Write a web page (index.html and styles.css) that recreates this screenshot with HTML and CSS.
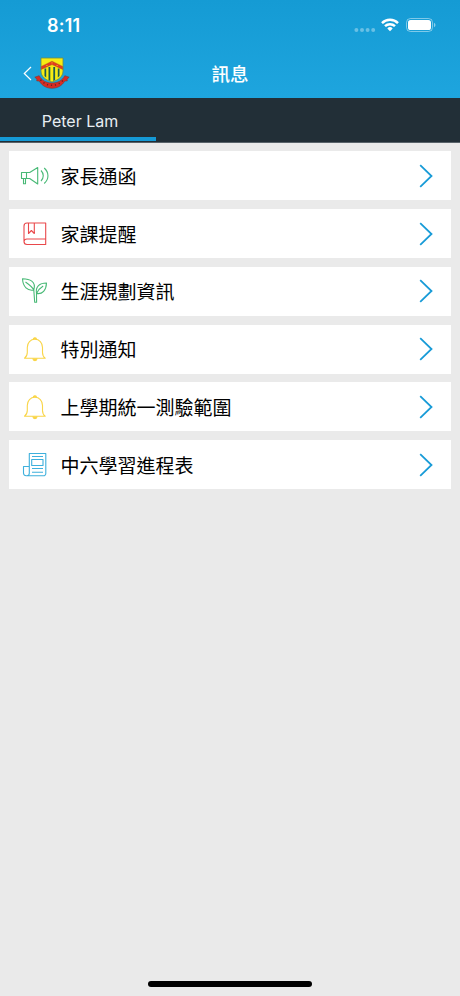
FILE: index.html
```html
<!DOCTYPE html>
<html lang="zh-Hant">
<head>
  <meta charset="UTF-8">
  <meta name="viewport" content="width=device-width, initial-scale=1.0">
  <title>訊息</title>
  <link rel="stylesheet" href="styles.css">
</head>
<body>

  <header class="top">
    <div class="status-bar">
      <span class="time">8:11</span>
      <div class="status-icons">
        <svg class="signal" width="22" height="6" viewBox="0 0 22 6" fill="#fff" opacity=".35">
          <circle cx="2.4" cy="3" r="2"/><circle cx="8" cy="3" r="2"/><circle cx="13.6" cy="3" r="2"/><circle cx="19.2" cy="3" r="2"/>
        </svg>
        <svg class="wifi" width="18" height="14" viewBox="0 0 18 14" fill="none" stroke="#fff" stroke-width="2.5">
          <path d="M1 5.1a11.4 11.4 0 0 1 16 0"/>
          <path d="M4 8.2a7.1 7.1 0 0 1 10 0"/>
          <path d="M9 13.2l-2.7-2.8a3.8 3.8 0 0 1 5.4 0z" fill="#fff" stroke="none"/>
        </svg>
        <svg class="battery" width="30" height="14" viewBox="0 0 30 14">
          <rect x=".5" y=".5" width="26" height="13" rx="4" fill="none" stroke="#fff" opacity=".45"/>
          <rect x="2" y="2" width="23" height="10" rx="2.6" fill="#fff"/>
          <path d="M28 4.8c2 .8 2 3.600 0 4.400z" fill="#fff" opacity=".5"/>
        </svg>
      </div>
    </div>
    <nav class="nav-bar">
      <a class="back" href="#">
        <svg width="9" height="15" viewBox="0 0 9 15" fill="none" stroke="#fff" stroke-width="1.2"><path d="M8 1L1.300 7.500 8 14"/></svg>
        <svg class="crest" width="36" height="34" viewBox="0 0 36 34">
          <path d="M7 2h22v13c0 6-5 9-11 11-6-2-11-5-11-11z" fill="#f6ec13" stroke="#6d8a4c" stroke-width=".8"/>
          <path d="M10.500 12.500h1.700v9l-1.700-1.500zM14.500 11h1.800v14l-1.800-1zM19.300 11h1.800v13l-1.800 1zM23.800 12.500h1.700v7.500l-1.700 1.500z" fill="#1c5b50"/>
          <path d="M7.300 10.400L18 5.200l10.700 5.200v3L18 8.600 7.300 13.400z" fill="#e33a20" stroke="#9b4a1d" stroke-width=".4"/>
          <path d="M12.500 9.500h.8M17.600 6.900h.8M22.700 9.500h.8" stroke="#f6ec13" stroke-width="1"/>
          <path d="M.8 21.200l4.400-1.500c2.500 4.800 7 7.300 12.800 7.300s10.300-2.500 12.800-7.300l4.400 1.500-2.200 2 .3 1.700-2.500.2c-3 4.800-7.500 7.200-12.800 7.200S8.200 29.900 5.200 25.100l-2.500-.2.300-1.700z" fill="#d92b24" stroke="#80352b" stroke-width=".6"/>
          <path d="M6.500 23.800c6 7.400 17 7.400 23 0" fill="none" stroke="#69251f" stroke-width="1.500" stroke-dasharray="1.200 2.800"/>
        </svg>
      </a>
      <h1>訊息</h1>
    </nav>
  </header>

  <div class="tabs">
    <a class="tab active" href="#">Peter Lam</a>
  </div>

  <main class="list">
    <a class="item" href="#">
      <svg class="icon green" viewBox="0 0 30 30">
        <path d="M1.500 11.500h5v6h-5zM6.500 11.500h3.200l8-5v16.500l-8-5.500H6.500M3.500 17.500v5.200h2v-5.200M21 9.500c3 3 3 7.500 0 10.500M24.200 7c5 4.500 5 11 0 15.500"/>
      </svg>
      <span class="label">家長通函</span>
      <svg class="arrow" viewBox="0 0 14 24"><path d="M1.200 1.200L12.500 12 1.200 22.800"/></svg>
    </a>
    <a class="item" href="#">
      <svg class="icon red" viewBox="0 0 30 30">
        <path d="M7 4h18.700v21.500H7a3 3 0 0 1-3-3V7a3 3 0 0 1 3-3zM4 22.500a3 3 0 0 1 3-2.500h18.700M8.500 4v10.500l2.900-3 2.900 3V4"/>
      </svg>
      <span class="label">家課提醒</span>
      <svg class="arrow" viewBox="0 0 14 24"><path d="M1.200 1.200L12.500 12 1.200 22.800"/></svg>
    </a>
    <a class="item" href="#">
      <svg class="icon green" viewBox="0 0 30 30">
        <path d="M13.800 14C7.500 15.200 3 11 2.500 2.800 9.500 3 16.500 5 13.800 14zM16.500 17.500c-1.200-7 3-10.500 10-10.500-.3 7.200-4 11.500-10 10.500zM5.500 6c3.500 2.500 7 5 8.300 8l.9 12.200h1.900l-.1-8.700c1.300-3 3.500-5.500 6.700-7.500"/>
      </svg>
      <span class="label">生涯規劃資訊</span>
      <svg class="arrow" viewBox="0 0 14 24"><path d="M1.200 1.200L12.500 12 1.200 22.800"/></svg>
    </a>
    <a class="item" href="#">
      <svg class="icon yellow" viewBox="0 0 30 30">
        <path d="M4.500 24.200h20.700c-2-1.500-2.700-3.200-2.700-5.700v-5c0-5-3.200-8.200-7.600-8.200s-7.600 3.200-7.600 8.200v5c0 2.500-.8 4.200-2.800 5.700z"/><path d="M13.300 5.200c0-1.800 3.200-1.800 3.200 0M12.800 24.500c.3 2.800 4 2.800 4.300 0" fill="#f9d548"/>
      </svg>
      <span class="label">特別通知</span>
      <svg class="arrow" viewBox="0 0 14 24"><path d="M1.200 1.200L12.500 12 1.200 22.800"/></svg>
    </a>
    <a class="item" href="#">
      <svg class="icon yellow" viewBox="0 0 30 30">
        <path d="M4.500 24.200h20.700c-2-1.500-2.700-3.200-2.700-5.700v-5c0-5-3.200-8.200-7.600-8.200s-7.600 3.200-7.600 8.200v5c0 2.500-.8 4.200-2.800 5.700z"/><path d="M13.300 5.200c0-1.800 3.200-1.800 3.200 0M12.800 24.500c.3 2.800 4 2.800 4.300 0" fill="#f9d548"/>
      </svg>
      <span class="label">上學期統一測驗範圍</span>
      <svg class="arrow" viewBox="0 0 14 24"><path d="M1.200 1.200L12.500 12 1.200 22.800"/></svg>
    </a>
    <a class="item" href="#">
      <svg class="icon blue" viewBox="0 0 30 30">
        <path d="M9.300 3.500h16.500v20a2.300 2.300 0 0 1-2.300 2.300H6.300a2.800 2.800 0 0 1-2.800-2.500v-6.800h5.800zM9.300 16.500v6.800c0 1.500-1 2.500-2.500 2.500M12 6.500h11M11.700 9.500H23v6H11.700zM12 18.500h11M12 22.300h11"/>
      </svg>
      <span class="label">中六學習進程表</span>
      <svg class="arrow" viewBox="0 0 14 24"><path d="M1.200 1.200L12.500 12 1.200 22.800"/></svg>
    </a>
  </main>

  <footer class="home">
    <div class="home-bar"></div>
  </footer>

</body>
</html>
```
FILE: styles.css
```css
* { box-sizing: border-box; }
body { margin: 0; min-height: 996px; display: flex; flex-direction: column; background: #eaeaea; font-family: Inter, "Noto Sans CJK TC", sans-serif; }
a { color: inherit; text-decoration: none; }
svg { display: block; flex: none; }

.top { height: 98px; background: linear-gradient(#159bd4, #1ea5de); color: white; }
.status-bar { height: 50px; padding: 0 24px 0 47px; display: flex; align-items: center; justify-content: space-between; }
.time { padding-top: 1px; font-size: 18px; font-weight: 600; letter-spacing: 0.2px; }
.status-icons { display: flex; align-items: center; }
.signal { margin: 9px 5px 0 0; }
.wifi { margin-right: 7px; }
.nav-bar { height: 48px; padding: 0 23px; display: grid; grid-template-columns: 1fr auto 1fr; align-items: center; }
.back { padding-bottom: 2px; display: flex; align-items: center; gap: 2px; }
h1 { margin: 0; font-size: 18.5px; font-weight: 500; line-height: 24px; }

.tabs { height: 45px; background: #222f37; border-bottom: 1px solid #59636a; display: flex; }
.tab { width: 156px; height: 43px; padding-top: 6px; display: flex; align-items: center; justify-content: center; color: #e8eef2; font-size: 16px; }
.tab.active { border-bottom: 4px solid #159ad6; padding-left: 4px; }

.list { padding: 8.300px 9px 0; display: flex; flex-direction: column; gap: 8.750px; }
.item { height: 49px; padding: 0 18px 0 11px; display: flex; align-items: center; background: white; }
.icon { width: 30px; height: 30px; fill: none; stroke-width: 1.1; stroke-linejoin: round; }
.green { stroke: #48b976; }
.red { stroke: #e9484b; }
.yellow { stroke: #f9d548; }
.blue { stroke: #3eb0dc; }
.label { flex: 1; margin-left: 10.500px; padding-top: 4px; color: #000; font-size: 19px; line-height: 28px; }
.arrow { width: 14px; height: 24px; fill: none; stroke: #189bd7; stroke-width: 1.8; }

.home { margin-top: auto; padding-bottom: 9px; display: flex; justify-content: center; }
.home-bar { width: 164px; height: 6px; border-radius: 3px; background: black; }
```
